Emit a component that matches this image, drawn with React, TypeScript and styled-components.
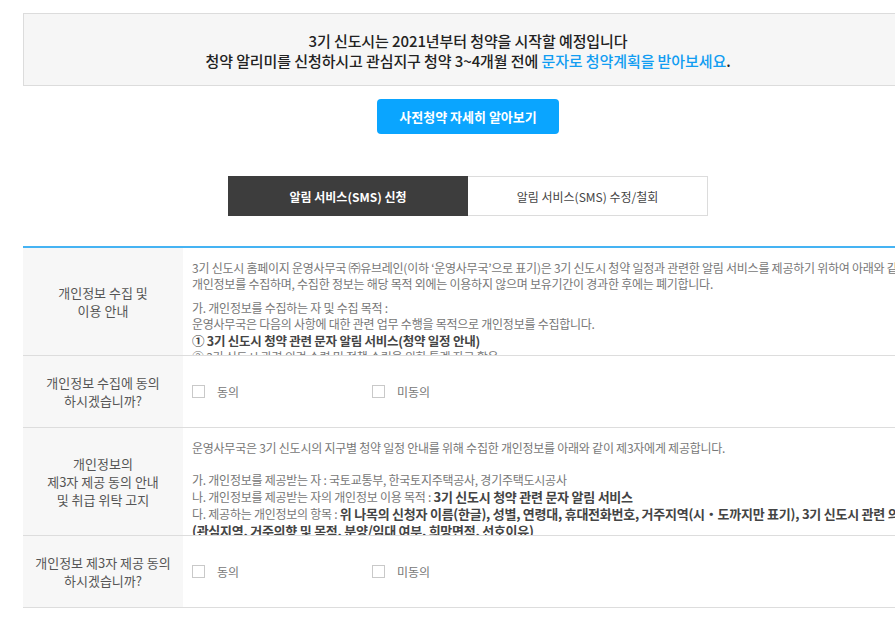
import styled, { createGlobalStyle } from "styled-components";

const GlobalStyle = createGlobalStyle`
  html, body {
    margin: 0;
    padding: 0;
    overflow: hidden;
    background: #fff;
  }
  body {
    font-family: "Noto Sans CJK KR", "Noto Sans", sans-serif;
  }
`;

const Page = styled.div`
  width: 890px;
  margin-left: 23px;
  padding-top: 13px;
`;

const Notice = styled.div`
  border: 1px solid #dcdcdc;
  background: #f6f6f6;
  padding: 17px 0 14px;
  text-align: center;
  font-size: 15px;
  line-height: 20px;
  font-weight: 500;
  letter-spacing: -0.1px;
  color: #222;
`;

const Highlight = styled.span`
  color: #119df2;
`;

const ButtonRow = styled.div`
  display: flex;
  justify-content: center;
  margin-top: 13px;
`;

const InfoButton = styled.button`
  width: 182px;
  height: 35px;
  border: none;
  border-radius: 4px;
  background: #0aa5ff;
  color: #fff;
  font-family: inherit;
  font-size: 13px;
  font-weight: 700;
`;

const Tabs = styled.div`
  display: flex;
  justify-content: center;
  margin-top: 42px;
`;

const Tab = styled.div<{ $active?: boolean }>`
  box-sizing: border-box;
  width: 240px;
  height: 40px;
  display: flex;
  align-items: center;
  justify-content: center;
  font-size: 12px;
  background: ${(p) => (p.$active ? "#3d3d3d" : "#fff")};
  color: ${(p) => (p.$active ? "#fff" : "#444")};
  font-weight: ${(p) => (p.$active ? 700 : 400)};
  border: 1px solid ${(p) => (p.$active ? "#3d3d3d" : "#dcdcdc")};
  border-left: ${(p) => (p.$active ? "1px solid #3d3d3d" : "none")};
`;

const Table = styled.div`
  margin-top: 30px;
  border-top: 2px solid #45b3f3;
`;

const Row = styled.div`
  display: flex;
  border-bottom: 1px solid #dddddd;
`;

const Label = styled.div`
  flex: none;
  width: 160px;
  background: #f7f7f7;
  display: flex;
  align-items: center;
  justify-content: center;
  text-align: center;
  font-size: 13px;
  line-height: 18px;
  color: #555;
`;

const ScrollBox = styled.div<{ $height: number }>`
  flex: 1;
  box-sizing: border-box;
  height: ${(p) => p.$height}px;
  overflow: hidden;
  padding: 12px 0 0 9px;
  font-size: 12px;
  letter-spacing: -0.25px;
  line-height: 16px;
  color: #777;
`;

const Line = styled.div<{ $gap?: number }>`
  white-space: nowrap;
  margin-bottom: ${(p) => p.$gap ?? 0}px;
`;

const BoldLine = styled.div`
  white-space: nowrap;
  line-height: 17px;
`;

const Strong = styled.b`
  font-size: 13px;
  font-weight: 700;
  color: #444;
`;

const BigStrong = styled.div`
  white-space: nowrap;
  font-size: 12.5px;
  line-height: 17px;
  font-weight: 700;
  color: #444;
`;

const Choices = styled.div`
  flex: 1;
  height: 71px;
  display: flex;
  align-items: center;
  padding-left: 9px;
`;

const Choice = styled.label`
  width: 180px;
  display: flex;
  align-items: center;
  gap: 12px;
  font-size: 12px;
  color: #777;
`;

const Box = styled.span`
  box-sizing: border-box;
  width: 13px;
  height: 13px;
  border: 1px solid #c9c9c9;
  background: #fff;
`;

function AgreeRow({ label }: { label: React.ReactNode }) {
  return (
    <Row>
      <Label>{label}</Label>
      <Choices>
        <Choice>
          <Box />
          동의
        </Choice>
        <Choice>
          <Box />
          미동의
        </Choice>
      </Choices>
    </Row>
  );
}

export default function App() {
  return (
    <>
      <GlobalStyle />
      <Page>
        <Notice>
          3기 신도시는 2021년부터 청약을 시작할 예정입니다
          <br />
          청약 알리미를 신청하시고 관심지구 청약 3~4개월 전에{" "}
          <Highlight>문자로 청약계획을 받아보세요</Highlight>.
        </Notice>

        <ButtonRow>
          <InfoButton>사전청약 자세히 알아보기</InfoButton>
        </ButtonRow>

        <Tabs>
          <Tab $active>알림 서비스(SMS) 신청</Tab>
          <Tab>알림 서비스(SMS) 수정/철회</Tab>
        </Tabs>

        <Table>
          <Row>
            <Label>
              개인정보 수집 및
              <br />
              이용 안내
            </Label>
            <ScrollBox $height={107}>
              <Line>
                3기 신도시 홈페이지 운영사무국 ㈜유브레인(이하 ‘운영사무국’으로 표기)은 3기 신도시 청약 일정과 관련한 알림 서비스를 제공하기 위하여 아래와 같이
              </Line>
              <Line $gap={8}>
                개인정보를 수집하며, 수집한 정보는 해당 목적 외에는 이용하지 않으며 보유기간이 경과한 후에는 폐기합니다.
              </Line>
              <Line>가. 개인정보를 수집하는 자 및 수집 목적 :</Line>
              <Line>운영사무국은 다음의 사항에 대한 관련 업무 수행을 목적으로 개인정보를 수집합니다.</Line>
              <BigStrong>① 3기 신도시 청약 관련 문자 알림 서비스(청약 일정 안내)</BigStrong>
              <Line>② 3기 신도시 관련 의견 수렴 및 정책 수립을 위한 통계 자료 활용</Line>
            </ScrollBox>
          </Row>

          <AgreeRow
            label={
              <>
                개인정보 수집에 동의
                <br />
                하시겠습니까?
              </>
            }
          />

          <Row>
            <Label>
              개인정보의
              <br />
              제3자 제공 동의 안내
              <br />및 취급 위탁 고지
            </Label>
            <ScrollBox $height={107}>
              <Line $gap={16}>
                운영사무국은 3기 신도시의 지구별 청약 일정 안내를 위해 수집한 개인정보를 아래와 같이 제3자에게 제공합니다.
              </Line>
              <Line>가. 개인정보를 제공받는 자 : 국토교통부, 한국토지주택공사, 경기주택도시공사</Line>
              <BoldLine>
                나. 개인정보를 제공받는 자의 개인정보 이용 목적 : <Strong>3기 신도시 청약 관련 문자 알림 서비스</Strong>
              </BoldLine>
              <BoldLine>
                다. 제공하는 개인정보의 항목 :{" "}
                <Strong>
                  위 나목의 신청자 이름(한글), 성별, 연령대, 휴대전화번호, 거주지역(시・도까지만 표기), 3기 신도시 관련 의견
                </Strong>
              </BoldLine>
              <BoldLine>
                <Strong>(관심지역, 거주의향 및 목적, 분양/임대 여부, 희망면적, 선호이유)</Strong>
              </BoldLine>
            </ScrollBox>
          </Row>

          <AgreeRow
            label={
              <>
                개인정보 제3자 제공 동의
                <br />
                하시겠습니까?
              </>
            }
          />
        </Table>
      </Page>
    </>
  );
}
